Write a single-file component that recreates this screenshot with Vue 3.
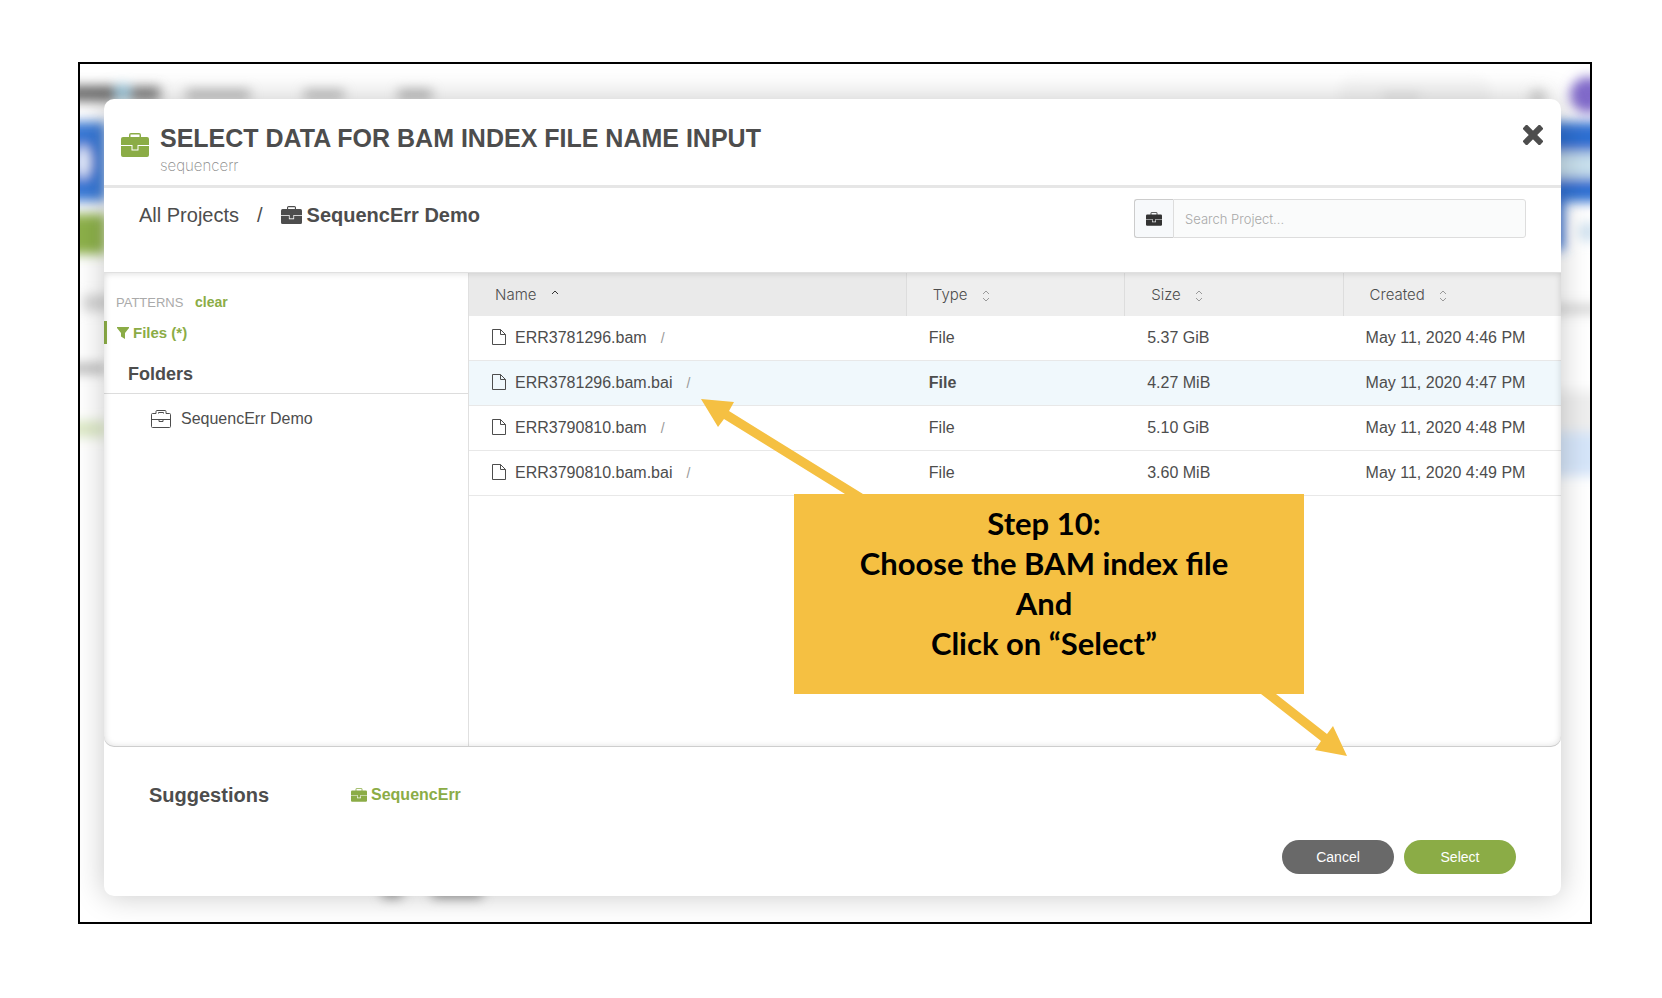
<script setup>
import { ref } from 'vue'

const files = [
  { name: 'ERR3781296.bam', size: '5.37 GiB', created: 'May 11, 2020 4:46 PM' },
  { name: 'ERR3781296.bam.bai', size: '4.27 MiB', created: 'May 11, 2020 4:47 PM' },
  { name: 'ERR3790810.bam', size: '5.10 GiB', created: 'May 11, 2020 4:48 PM' },
  { name: 'ERR3790810.bam.bai', size: '3.60 MiB', created: 'May 11, 2020 4:49 PM' }
]
const columns = ['Name', 'Type', 'Size', 'Created']
const selected = ref(1)
const query = ref('')
</script>

<template>
  <svg class="defs" aria-hidden="true">
    <symbol id="briefcase" viewBox="0 0 28 24">
      <path d="M8 5V2Q8 0 10 0H18Q20 0 20 2V5H18.500V1.500H9.500V5Z" />
      <path d="M2 4H26Q28 4 28 6V12H0V6Q0 4 2 4Z" />
      <path d="M0 13H10.500V17.500H17.500V13H28V22Q28 24 26 24H2Q0 24 0 22Z" />
      <path d="M11.500 12H16.500V16.500H11.500Z" />
    </symbol>
  </svg>
  <div class="page">
    <div class="frame">
      <svg class="behind behind-left" width="520" height="860" aria-hidden="true">
        <defs>
          <filter id="soft" x="-50%" y="-50%" width="200%" height="200%"><feGaussianBlur stdDeviation="6" /></filter>
        </defs>
        <g filter="url(#soft)">
          <rect x="-20" y="22" width="56" height="15" fill="#666" />
          <rect x="38" y="21" width="10" height="14" fill="#7fbcd8" />
          <rect x="50" y="23" width="30" height="13" fill="#777" />
          <rect x="106" y="26" width="64" height="9" fill="#b0b0b0" />
          <rect x="224" y="26" width="40" height="9" fill="#b5b5b5" />
          <rect x="318" y="26" width="34" height="9" fill="#aaa" />
          <rect x="-20" y="58" width="46" height="79" fill="#3878d6" />
          <ellipse cx="3" cy="98" rx="7" ry="16" fill="#f2f6ff" />
          <rect x="-20" y="150" width="46" height="40" fill="#8cb04a" />
          <rect x="3" y="231" width="30" height="16" fill="#d2d2d2" />
          <rect x="-20" y="300" width="46" height="9" fill="#b0b0b0" />
          <rect x="-20" y="357" width="46" height="16" fill="#dce8c5" />
          <rect x="302" y="816" width="20" height="18" fill="#999" />
          <rect x="352" y="816" width="50" height="18" fill="#999" />
        </g>
      </svg>
      <svg class="behind behind-right" width="260" height="860" aria-hidden="true">
        <g filter="url(#soft)">
          <rect x="10" y="14" width="150" height="30" rx="12" fill="#f8f8f8" />
          <rect x="52" y="29" width="38" height="7" fill="#e0e0e0" />
          <circle cx="208" cy="33" r="8" fill="#d2d2d2" />
          <circle cx="258" cy="31" r="18" fill="#8069c9" />
          <rect x="220" y="58" width="60" height="80" fill="#2f70d2" />
          <rect x="220" y="88" width="60" height="26" fill="#c7dfec" />
          <rect x="220" y="130" width="14" height="56" fill="#3971d3" />
          <circle cx="258" cy="168" r="10" fill="#cfe1ef" />
          <rect x="220" y="241" width="60" height="8" fill="#ccc" />
          <rect x="220" y="327" width="60" height="50" fill="#eee" />
          <rect x="220" y="368" width="60" height="44" fill="#d5e5f9" />
        </g>
      </svg>

      <section class="modal" role="dialog" aria-labelledby="dialog-title">
        <header class="head">
          <svg class="head-icon" aria-hidden="true"><use href="#briefcase" /></svg>
          <div class="titles">
            <h1 id="dialog-title">SELECT DATA FOR BAM INDEX FILE NAME INPUT</h1>
            <p>sequencerr</p>
          </div>
          <button class="close" type="button" aria-label="Close">
            <svg viewBox="0 0 20 20" aria-hidden="true">
              <g transform="rotate(45 10 10)">
                <rect x="-2" y="7" width="24" height="6" rx="1" />
                <rect x="7" y="-2" width="6" height="24" rx="1" />
              </g>
            </svg>
          </button>
        </header>

        <div class="bar">
          <nav class="crumbs">
            <a href="#projects">All Projects</a>
            <span class="slash">/</span>
            <a class="current" href="#demo">
              <svg aria-hidden="true"><use href="#briefcase" /></svg>SequencErr Demo
            </a>
          </nav>
          <div class="search">
            <label for="search" aria-label="Search Project">
              <svg aria-hidden="true"><use href="#briefcase" /></svg>
            </label>
            <input id="search" v-model="query" type="text" placeholder="Search Project..." />
          </div>
        </div>

        <div class="body">
          <aside class="side">
            <div class="patterns">PATTERNS <a href="#clear">clear</a></div>
            <a class="filter" href="#files">
              <svg viewBox="0 0 12 12" aria-hidden="true"><path d="M0 0H12V1L8 6V12L4 9.500V6L0 1Z" /></svg>Files (*)
            </a>
            <h2>Folders</h2>
            <a class="folder" href="#folder">
              <svg viewBox="0 0 20 18" aria-hidden="true">
                <path d="M1.500 3.500H5V1.500Q5 .5 6 .5H14Q15 .5 15 1.500V3.500H18.500Q19.500 3.500 19.500 4.500V16.500Q19.500 17.500 18.500 17.500H1.500Q.5 17.500 .5 16.500V4.500Q.5 3.500 1.500 3.500ZM7.500 3.500V2.500H12.500V3.500M.5 9.500H19.500M8 9.500V11.500H12V9.500" />
              </svg>SequencErr Demo
            </a>
          </aside>
          <div class="list">
            <table>
              <thead>
                <tr>
                  <th v-for="(c, i) in columns" :key="c" scope="col">
                    {{ c }}
                    <svg :class="{ sorted: i === 0 }" viewBox="0 0 8 12" aria-hidden="true">
                      <path d="M1 4L4 1L7 4" />
                      <path v-if="i" d="M1 8L4 11L7 8" />
                    </svg>
                  </th>
                </tr>
              </thead>
              <tbody>
                <tr v-for="(f, i) in files" :key="f.name" :class="{ on: i === selected }" @click="selected = i">
                  <td>
                    <svg viewBox="0 0 14 16" aria-hidden="true"><path d="M.5 .5H8.500L13.500 5.500V15.500H.5ZM8.500 .5V5.500H13.500" /></svg>{{ f.name }}<span class="path">/</span>
                  </td>
                  <td class="type">File</td>
                  <td>{{ f.size }}</td>
                  <td>{{ f.created }}</td>
                </tr>
              </tbody>
            </table>
          </div>
        </div>

        <div class="suggest">
          <h3>Suggestions</h3>
          <a href="#suggestion"><svg aria-hidden="true"><use href="#briefcase" /></svg>SequencErr</a>
        </div>
        <footer class="actions">
          <button class="cancel" type="button">Cancel</button>
          <button class="select" type="button">Select</button>
        </footer>

        <div class="note">
          <svg viewBox="0 0 646 357" aria-hidden="true">
            <path d="M0 0L33 3L28 12L162 95H144L23 20L17 28Z" />
            <path d="M560 295H575L626 335L632 327L646 357L614 351L620 342Z" />
          </svg>
          <div class="note-text">
            <span>Step 10:</span>
            <span>Choose the BAM index file</span>
            <span>And</span>
            <span>Click on “Select”</span>
          </div>
        </div>
      </section>
    </div>
  </div>
</template>

<style>
body {
  background: #fff;
}
</style>

<style scoped>
.defs {
  position: absolute;
  width: 0;
  height: 0;
}
.page {
  box-sizing: border-box;
  display: flex;
  min-height: 100vh;
  padding: 62px 70px 74px 78px;
  color: #4d4d4d;
  font-family: "Liberation Sans", Arial, sans-serif;
  font-size: 16px;
}
.frame {
  position: relative;
  box-sizing: border-box;
  display: flex;
  flex: 1;
  min-width: 0;
  padding: 35px 29px 26px 24px;
  border: 2px solid #000;
  overflow: hidden;
}
.behind {
  position: absolute;
  top: 0;
}
.behind-left {
  left: 0;
}
.behind-right {
  right: 0;
}
.modal {
  position: relative;
  display: flex;
  flex: 1;
  flex-direction: column;
  min-width: 0;
  border-radius: 10px;
  background: #fff;
  box-shadow: 0 0 30px rgba(0, 0, 0, 0.22);
}
svg {
  fill: currentColor;
}
a {
  color: inherit;
  text-decoration: none;
}
h1,
h2,
h3,
p {
  margin: 0;
}
.head {
  display: flex;
  align-items: flex-start;
  height: 86px;
  padding: 0 18px 0 17px;
  border-bottom: 3px solid #e6e6e6;
}
.head-icon {
  width: 28px;
  height: 24px;
  margin: 34px 11px 0 0;
  color: #8bac46;
}
.titles {
  flex: 1;
  padding-top: 24px;
}
h1 {
  font-size: 25px;
  line-height: 30px;
}
.titles p {
  color: #8c8c8c;
  font-family: Inter, sans-serif;
  font-size: 15px;
  font-weight: 200;
  line-height: 26px;
}
.close {
  display: flex;
  margin-top: 26px;
  padding: 0;
  border: 0;
  background: none;
  color: #4d4d4d;
}
.close svg {
  width: 20px;
  height: 20px;
}
.bar {
  display: flex;
  align-items: flex-start;
  justify-content: space-between;
  height: 84px;
  padding: 0 35px;
  border-bottom: 1px solid #e0e0e0;
}
.crumbs {
  display: flex;
  align-items: center;
  gap: 18px;
  padding-top: 15px;
  font-size: 20px;
  line-height: 24px;
}
.current {
  display: flex;
  align-items: center;
  gap: 5px;
  font-weight: bold;
}
.current svg {
  width: 21px;
  height: 18px;
}
.search {
  display: flex;
  width: 392px;
  margin-top: 11px;
}
.search label {
  display: flex;
  align-items: center;
  justify-content: center;
  box-sizing: border-box;
  width: 39px;
  border: 1px solid #ccc;
  border-right: 0;
  border-radius: 3px 0 0 3px;
  background: #f7f9fb;
  color: #333;
}
.search svg {
  width: 16px;
  height: 14px;
}
.search input {
  box-sizing: border-box;
  flex: 1;
  min-width: 0;
  height: 39px;
  padding: 0 11px;
  border: 1px solid #ddd;
  border-radius: 0 3px 3px 0;
  background: #fafbfb;
  font-family: Inter, sans-serif;
  font-size: 13px;
  font-weight: 300;
}
.search input::placeholder {
  color: #a8a8a8;
}
.body {
  position: relative;
  display: flex;
  flex: 1;
  border-radius: 0 0 10px 10px;
}
.body::after {
  position: absolute;
  inset: 0;
  border-radius: 0 0 10px 10px;
  box-shadow: inset 0 0 7px rgba(0, 0, 0, 0.16), inset 0 -1px 0 #ddd;
  content: "";
  pointer-events: none;
}
.side {
  box-sizing: border-box;
  width: 365px;
  border-right: 1px solid #e0e0e0;
}
.patterns {
  padding: 20px 12px 0;
  color: #aaa;
  font-size: 13px;
  line-height: 18px;
}
.patterns a {
  margin-left: 8px;
  color: #8bac46;
  font-size: 14px;
  font-weight: bold;
}
.filter {
  display: flex;
  align-items: center;
  gap: 4px;
  height: 23px;
  margin-top: 9px;
  padding-left: 10px;
  border-left: 3px solid #8bac46;
  color: #8bac46;
  font-size: 15px;
  font-weight: bold;
}
.filter svg {
  width: 12px;
  height: 12px;
}
h2 {
  padding: 20px 24px 8px;
  border-bottom: 1px solid #ddd;
  font-size: 18px;
  line-height: 21px;
}
.folder {
  display: flex;
  align-items: center;
  gap: 10px;
  padding: 16px 47px;
}
.folder svg {
  width: 20px;
  height: 18px;
}
.folder svg,
td svg,
th svg {
  fill: none;
  stroke: currentColor;
}
.list {
  flex: 1;
  min-width: 0;
}
table {
  width: 100%;
  border-collapse: separate;
  border-spacing: 0;
  table-layout: fixed;
}
th {
  box-sizing: border-box;
  width: 20%;
  height: 43px;
  padding: 0 26px;
  border-left: 1px solid #ddd;
  background: #eee;
  font-family: Inter, sans-serif;
  font-size: 15px;
  font-weight: 300;
  text-align: left;
}
th:first-child {
  width: 40%;
  border-left: 0;
  background: #eaeaea;
}
th svg {
  width: 8px;
  height: 12px;
  margin-left: 10px;
  color: #999;
  vertical-align: -2px;
}
th .sorted {
  color: #333;
}
td {
  box-sizing: border-box;
  height: 45px;
  padding: 0 23px;
  border-bottom: 1px solid #e8e8e8;
  white-space: nowrap;
}
td svg {
  width: 14px;
  height: 16px;
  margin-right: 9px;
  vertical-align: -2px;
}
.path {
  margin-left: 14px;
  color: #999;
  font-size: 14px;
}
.on td {
  background: #f0f8fc;
}
.on .type {
  font-weight: bold;
}
.suggest {
  display: flex;
  align-items: center;
  gap: 82px;
  padding: 34px 45px 0;
}
h3 {
  font-size: 20px;
  line-height: 28px;
}
.suggest a {
  display: flex;
  align-items: center;
  gap: 4px;
  color: #8bac46;
  font-weight: bold;
}
.suggest svg {
  width: 16px;
  height: 14px;
}
.actions {
  display: flex;
  justify-content: flex-end;
  gap: 10px;
  padding: 31px 45px 22px;
}
.actions button {
  width: 112px;
  height: 34px;
  border: 0;
  border-radius: 17px;
  color: #fff;
  font-family: "Liberation Sans", Arial, sans-serif;
  font-size: 14px;
}
.cancel {
  background: #696969;
}
.select {
  background: #8bac46;
}
.note {
  position: absolute;
  top: 300px;
  left: 597px;
  width: 646px;
  height: 357px;
  color: #f5c042;
  pointer-events: none;
}
.note svg {
  display: block;
}
.note-text {
  position: absolute;
  top: 95px;
  left: 93px;
  display: flex;
  flex-direction: column;
  box-sizing: border-box;
  width: 510px;
  height: 200px;
  padding: 9px 10px 0 0;
  background: #f5c042;
  color: #000;
  font-family: Lato, sans-serif;
  font-size: 31px;
  font-weight: bold;
  line-height: 40px;
  text-align: center;
}
</style>
